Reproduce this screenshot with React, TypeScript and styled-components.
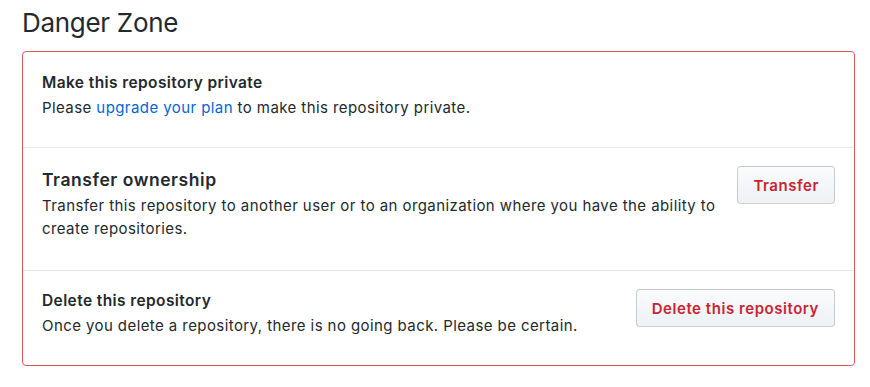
import React from "react";
import styled, { createGlobalStyle } from "styled-components";

const GlobalStyle = createGlobalStyle`
  body {
    margin: 0;
    background: #fff;
    font-family: Inter, "Noto Sans", sans-serif;
    color: #24292e;
  }
`;

const Page = styled.div`
  padding: 4px 15px 0 22px;
  width: 870px;
  box-sizing: border-box;
`;

const Heading = styled.h2`
  margin: 0 0 10px;
  font-size: 26px;
  font-weight: 400;
  line-height: 37px;
  letter-spacing: -0.3px;
`;

const Box = styled.div`
  border: 1px solid #dd5763;
  border-radius: 4px;
  width: 833px;
  box-sizing: border-box;
`;

const Row = styled.div<{ $pad: string }>`
  display: flex;
  align-items: flex-start;
  justify-content: space-between;
  padding: ${({ $pad }) => $pad};
  & + & {
    border-top: 1px solid #e6e8eb;
  }
`;

const Info = styled.div`
  flex: 1;
`;

const Title = styled.div<{ $big?: boolean }>`
  font-weight: 600;
  font-size: ${({ $big }) => ($big ? "17.5px" : "15.5px")};
  letter-spacing: ${({ $big }) => ($big ? "0.55px" : "0.4px")};
  line-height: ${({ $big }) => ($big ? "24px" : "22px")};
  margin-bottom: 2px;
`;

const Text = styled.p<{ $width?: string }>`
  margin: 0;
  font-size: 15px;
  letter-spacing: 0.42px;
  line-height: 23px;
  max-width: ${({ $width }) => $width || "none"};
`;

const Link = styled.a`
  color: #0366d6;
  text-decoration: none;
`;

const DangerButton = styled.button<{ $mt: string }>`
  margin-top: ${({ $mt }) => $mt};
  flex: none;
  height: 38px;
  padding: 0 15px;
  font-family: inherit;
  font-size: 15px;
  font-weight: 600;
  letter-spacing: 0.55px;
  color: #cb2431;
  background: linear-gradient(-180deg, #fafbfc 0%, #eff3f6 90%);
  border: 1px solid rgba(27, 31, 35, 0.2);
  border-radius: 4px;
  cursor: pointer;
`;

export default function App() {
  return (
    <>
      <GlobalStyle />
      <Page>
        <Heading>Danger Zone</Heading>
        <Box>
          <Row $pad="20px 19px 28px">
            <Info>
              <Title>Make this repository private</Title>
              <Text>
                Please <Link href="#">upgrade your plan</Link> to make this
                repository private.
              </Text>
            </Info>
          </Row>
          <Row $pad="20px 19px 30px">
            <Info>
              <Title $big>Transfer ownership</Title>
              <Text $width="690px">
                Transfer this repository to another user or to an organization
                where you have the ability to create repositories.
              </Text>
            </Info>
            <DangerButton $mt="-2px">Transfer</DangerButton>
          </Row>
          <Row $pad="19px 19px 28px">
            <Info>
              <Title>Delete this repository</Title>
              <Text>
                Once you delete a repository, there is no going back. Please be
                certain.
              </Text>
            </Info>
            <DangerButton $mt="-1px">Delete this repository</DangerButton>
          </Row>
        </Box>
      </Page>
    </>
  );
}
